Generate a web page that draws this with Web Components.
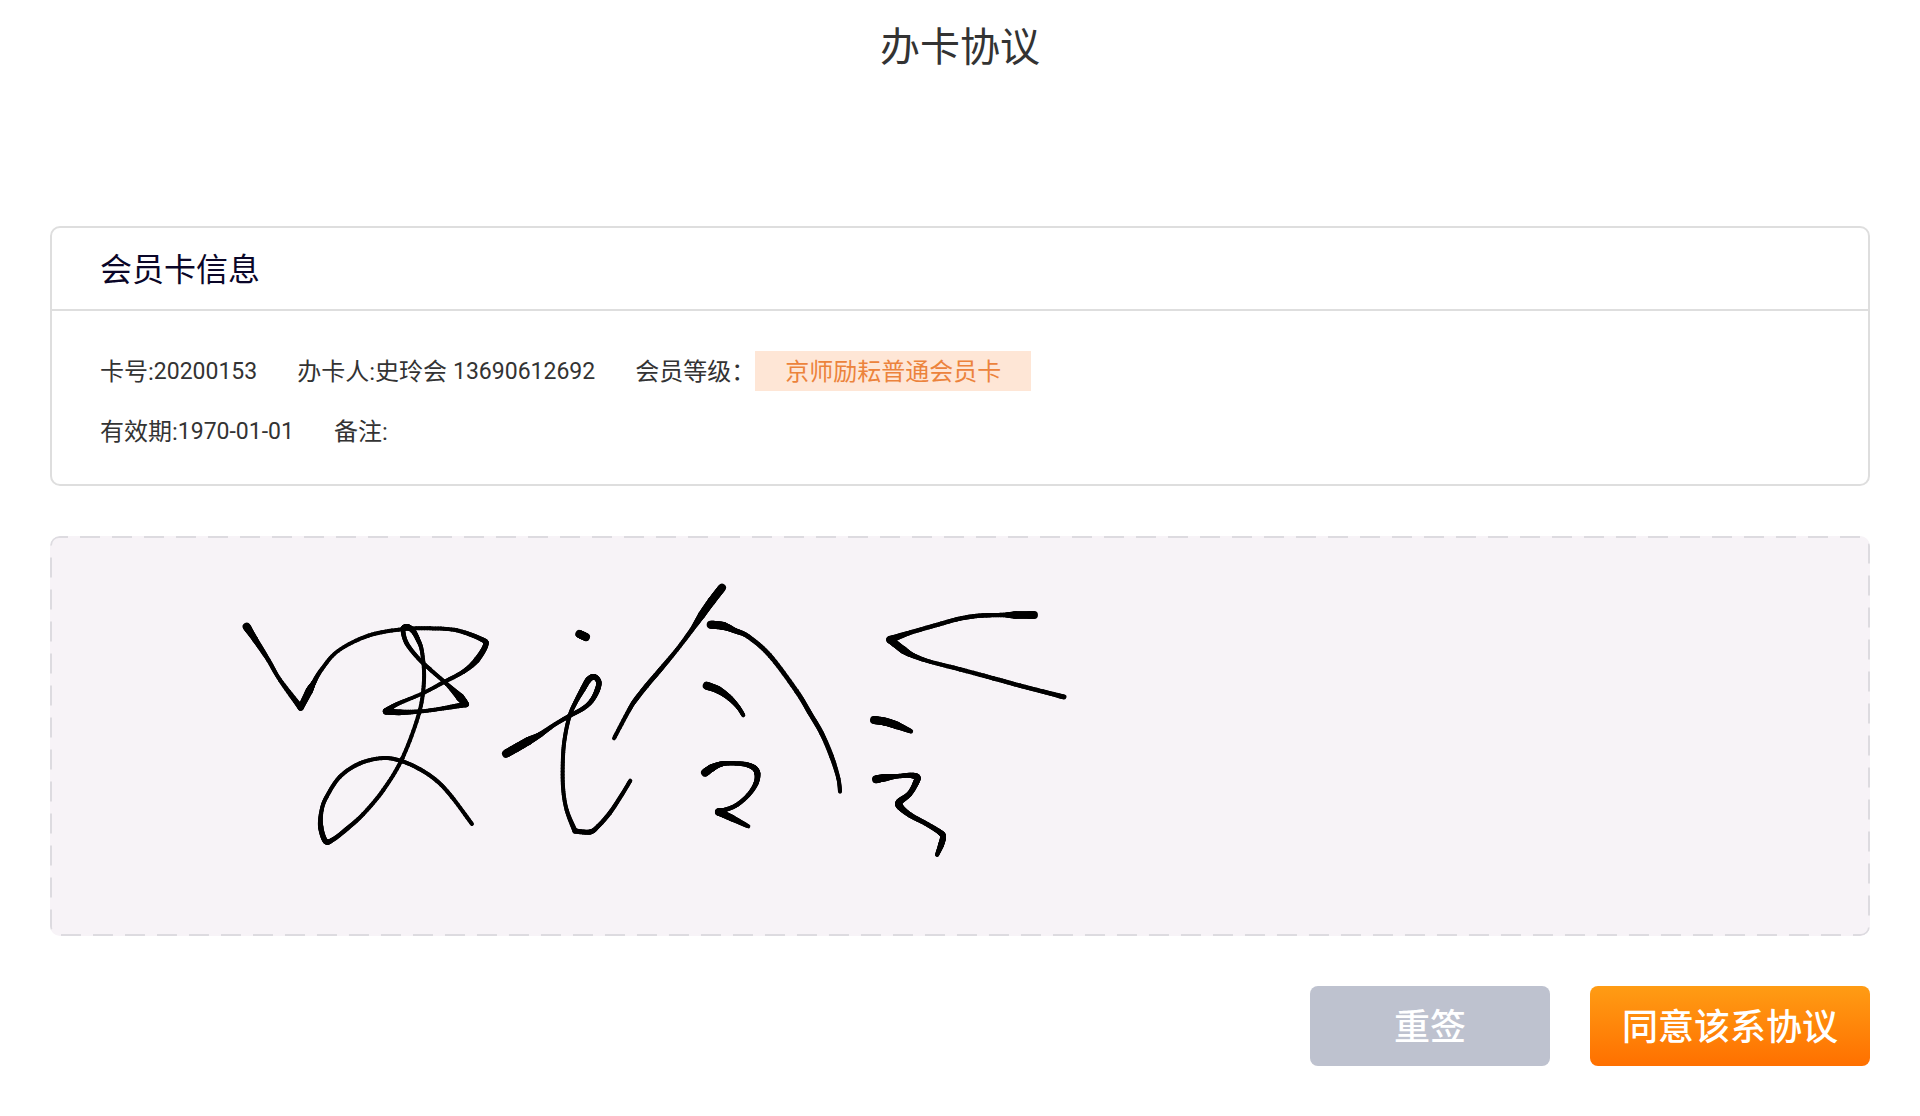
<!DOCTYPE html>
<html lang="zh-CN">
<head>
<meta charset="utf-8">
<title>办卡协议</title>
<style>
  body { margin: 0; background: #fff; font-family: Roboto, "Noto Sans CJK SC", sans-serif; color: #333; }
</style>
</head>
<body>
<agreement-page>
  <span slot="title">办卡协议</span>
  <info-card>
    <span slot="heading">会员卡信息</span>
    <info-row>
      <info-field>卡号:<span slot="value">20200153</span></info-field>
      <info-field>办卡人:史玲会&nbsp;<span slot="value">13690612692</span></info-field>
      <info-field>会员等级：<level-tag slot="value">京师励耘普通会员卡</level-tag></info-field>
    </info-row>
    <info-row>
      <info-field>有效期:<span slot="value">1970-01-01</span></info-field>
      <info-field>备注:</info-field>
    </info-row>
  </info-card>
  <signature-pad></signature-pad>
  <action-button slot="actions">重签</action-button>
  <action-button slot="actions" kind="primary">同意该系协议</action-button>
</agreement-page>

<script>
const define = (name, html, setup) => {
  const template = document.createElement('template');
  template.innerHTML = html;
  customElements.define(name, class extends HTMLElement {
    constructor() {
      super();
      this.attachShadow({ mode: 'open' }).append(template.content.cloneNode(true));
    }
    connectedCallback() { if (setup) setup(this.shadowRoot); }
  });
};

define('agreement-page', `
  <style>
    :host { display: block; }
    h1 { margin: 0; padding: 18px 0 148px; font-size: 40px; line-height: 60px; font-weight: 400; text-align: center; }
    main { display: flex; flex-direction: column; gap: 50px; padding: 0 50px 50px; }
    footer { display: flex; justify-content: flex-end; gap: 40px; }
  </style>
  <h1><slot name="title"></slot></h1>
  <main>
    <slot></slot>
    <footer><slot name="actions"></slot></footer>
  </main>`);

define('info-card', `
  <style>
    :host { display: block; border: 2px solid #dedede; border-radius: 10px; }
    h2 { margin: 0; padding: 18px 48px 15px; font-size: 32px; line-height: 48px; font-weight: 400; color: #0a0628; border-bottom: 2px solid #dedede; }
    .body { display: flex; flex-direction: column; gap: 20px; padding: 40px 48px 33px; }
  </style>
  <h2><slot name="heading"></slot></h2>
  <div class="body"><slot></slot></div>`);

define('info-row', `
  <style>:host { display: flex; flex-wrap: wrap; gap: 20px 40px; }</style>
  <slot></slot>`);

define('info-field', `
  <style>
    :host { display: flex; align-items: center; font-size: 24px; line-height: 38px; white-space: nowrap; }
    .label, ::slotted(span) { padding-top: 2px; }
    ::slotted(span) { font-size: 23px; }
  </style>
  <span class="label"><slot></slot></span><slot name="value"></slot>`);

define('level-tag', `
  <style>:host { display: block; padding: 2px 30px 0; background: #fee6d6; color: #ec833c; }</style>
  <slot></slot>`);

define('action-button', `
  <style>
    button { display: block; min-width: 240px; height: 80px; padding: 4px 32px 0; border: 0; border-radius: 8px;
      background: #bec2cf; color: #fff; font: inherit; font-size: 36px; font-weight: 500; line-height: 54px; }
    :host { display: block; }
    :host([kind="primary"]) button { background: linear-gradient(#ff9c14, #ff7000); }
  </style>
  <button type="button"><slot></slot></button>`);

// Each stroke: origin in pad pixels, then x, y, pen width in thirds of a pixel.
// A repeated point makes a sharp corner.
const STROKES = [
  [180, 44, '50,140,25 75,178,18 115,240,13 150,300,12 212,383,18 212,383,18 238,332,22 250,310,15 275,268,12 325,212,11 415,167,12 515,148,12 600,145,12 680,151,12 755,178,14 767,195,16 740,240,18 700,275,13 640,307,12 578,340,11 500,373,12 468,394,19 468,394,19 510,397,17 575,394,12 640,385,12 708,373,17 708,373,17 690,352,24 650,312,12 600,268,12 565,235,12 530,190,13 519,150,14 530,141,18 547,150,16 562,175,14 576,215,12 582,300,12 567,400,12 517,535,12 460,630,12 400,702,12 350,747,13 310,778,13 287,784,16 272,740,16 275,690,12 290,650,12 330,590,12 390,550,12 460,534,12 517,544,12 570,568,12 620,602,12 665,650,12 726,732,12'],
  [440, 34, '268,192,24 288,201,24'],
  [440, 34, '48,551,24 80,533,25 115,513,24 150,494,16 195,463,12 238,438,13 280,415,13 305,392,14 322,360,16 326,335,16 312,320,16 295,330,18 280,355,17 255,400,13 238,440,12 225,500,12 219,560,12 219,650,12 230,720,12 255,783,15 255,783,15 300,786,15 325,768,13 360,728,13 395,675,12 421,632,12'],
  [610, 34, '186,53,24 155,93,24 125,135,22 95,180,14 50,240,12 0,300,14 -40,347,14 -70,385,14 -90,415,13 -138,505,12'],
  [610, 34, '152,164,24 190,168,24 225,182,16 265,200,14 330,257,14 410,364,14 450,430,14 485,490,14 515,560,14 535,625,12 540,665,12'],
  [610, 34, '140,347,24 175,360,22 210,385,17 235,412,13 250,436,12'],
  [610, 34, '135,608,24 155,594,22 180,583,16 205,580,13 250,582,14 280,592,16 292,610,18 288,640,15 265,675,13 230,705,13 195,720,13 176,726,22 176,726,22 215,744,20 265,769,12'],
  [810, 54, '522,75,24 465,75,22 430,75,13 380,76,13 340,79,13 290,88,13 230,105,13 150,128,13 90,149,22 90,149,22 130,180,22 160,197,15 210,215,12 300,238,13 400,265,13 480,287,13 550,305,13 612,321,15'],
  [810, 54, '42,390,24 75,395,24 110,406,23 153,424,13'],
  [810, 54, '48,568,24 75,563,22 110,559,13 150,556,15 171,562,20 167,580,18 148,612,16 118,636,20 120,650,20 150,675,16 200,702,14 240,727,16 249,740,18 243,765,18 231,795,12'],
];

const spline = (a, b, c, d, t) => .5 * (2 * b + (c - a) * t + (2 * a - 5 * b + 4 * c - d) * t * t + (3 * b - a - 3 * c + d) * t * t * t);

const drawStrokes = root => {
  const ink = root.querySelector('.ink');
  const lines = [];
  for (const [ox, oy, data] of STROKES) {
    const pts = data.split(' ').map(p => p.split(',').map(Number));
    let last = null;
    for (let i = 0; i < pts.length - 1; i++) {
      const b = pts[i], c = pts[i + 1];
      if (b[0] === c[0] && b[1] === c[1]) continue;
      const a = pts[i - 1] || b, d = pts[i + 2] || c;
      for (let s = 0; s <= 10; s++) {
        const t = s / 10;
        const p = [ox + spline(a[0], b[0], c[0], d[0], t) / 3, oy + spline(a[1], b[1], c[1], d[1], t) / 3, (b[2] + (c[2] - b[2]) * t) / 3];
        if (last) lines.push(`<line x1="${last[0]}" y1="${last[1]}" x2="${p[0]}" y2="${p[1]}" stroke-width="${p[2]}"/>`);
        last = p;
      }
    }
  }
  ink.innerHTML = lines.join('');
};

define('signature-pad', `
  <style>
    :host { display: block; height: 400px; border-radius: 10px; background: #f7f3f7; overflow: hidden; }
    svg { display: block; width: 100%; height: 100%; }
    .frame { x: 1px; y: 1px; width: calc(100% - 2px); height: calc(100% - 2px); fill: none; stroke: #dddbe0; stroke-width: 2; stroke-dasharray: 20 12; stroke-dashoffset: 11; }
    .ink { stroke: #000; stroke-linecap: round; }
  </style>
  <svg role="img" aria-label="签名">
    <rect class="frame" rx="8" ry="8"/>
    <g class="ink"></g>
  </svg>`, drawStrokes);
</script>
</body>
</html>
